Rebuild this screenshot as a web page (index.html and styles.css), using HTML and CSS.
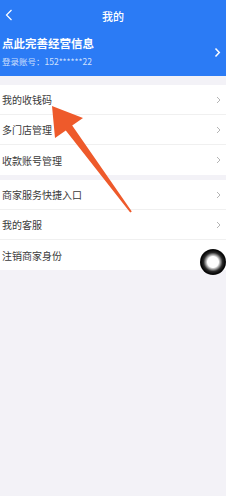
FILE: index.html
```html
<!DOCTYPE html>
<html lang="zh">
<head>
<meta charset="utf-8">
<link rel="stylesheet" href="styles.css">
</head>
<body>
<div class="page">
  <header class="hero">
    <div class="nav">
      <svg class="back" width="8" height="12" viewBox="0 0 8 12"><polyline points="6.5,1 1.5,6 6.5,11" fill="none" stroke="#fff" stroke-width="1.2"/></svg>
      <div class="title">我的</div>
    </div>
    <div class="info">
      <div class="info-text">
        <div class="info-title">点此完善经营信息</div>
        <div class="info-sub">登录账号：152******22</div>
      </div>
      <svg class="info-arrow" width="7" height="11" viewBox="0 0 7 11"><polyline points="1.5,1.5 5.3,5.5 1.5,9.5" fill="none" stroke="#fff" stroke-width="1.5"/></svg>
    </div>
  </header>
  <section class="group first">
    <div class="row"><span>我的收钱码</span><svg class="chev" width="5" height="8" viewBox="0 0 5 8"><polyline points="1,1 4,4 1,7" fill="none" stroke="#b5b5b5" stroke-width="1"/></svg></div>
    <div class="row"><span>多门店管理</span><svg class="chev" width="5" height="8" viewBox="0 0 5 8"><polyline points="1,1 4,4 1,7" fill="none" stroke="#b5b5b5" stroke-width="1"/></svg></div>
    <div class="row"><span>收款账号管理</span><svg class="chev" width="5" height="8" viewBox="0 0 5 8"><polyline points="1,1 4,4 1,7" fill="none" stroke="#b5b5b5" stroke-width="1"/></svg></div>
  </section>
  <section class="group second">
    <div class="row"><span>商家服务快捷入口</span><svg class="chev" width="5" height="8" viewBox="0 0 5 8"><polyline points="1,1 4,4 1,7" fill="none" stroke="#b5b5b5" stroke-width="1"/></svg></div>
    <div class="row"><span>我的客服</span><svg class="chev" width="5" height="8" viewBox="0 0 5 8"><polyline points="1,1 4,4 1,7" fill="none" stroke="#b5b5b5" stroke-width="1"/></svg></div>
    <div class="row"><span>注销商家身份</span></div>
  </section>
  <svg class="pointer" width="226" height="496" viewBox="0 0 226 496">
    <polygon points="52,106 83,118 72.2,125.6 131.8,211.4 130.2,212.6 65.8,130.4 55,138" fill="#ee5a2b"/>
  </svg>
  <div class="touch"></div>
</div>
</body>
</html>
```
FILE: styles.css
```css
html, body {
  margin: 0;
  padding: 0;
}
body {
  width: 226px;
  height: 496px;
  overflow: hidden;
  background: #f3f2f7;
  font-family: "Noto Sans CJK SC", "Noto Sans", sans-serif;
}
.page {
  position: relative;
  width: 226px;
  height: 496px;
}
.hero {
  background: #2b7bf5;
  height: 76px;
  color: #fff;
}
.nav {
  height: 32px;
  display: flex;
  align-items: center;
  justify-content: center;
  position: relative;
}
.back {
  position: absolute;
  left: 5px;
  top: 9px;
}
.title {
  font-size: 11px;
  font-weight: 500;
  line-height: 32px;
}
.info {
  display: flex;
  align-items: center;
  justify-content: space-between;
  padding: 3px 5px 0 2px;
}
.info-title {
  font-size: 11.5px;
  font-weight: 700;
  line-height: 16px;
}
.info-sub {
  font-size: 8.5px;
  line-height: 14px;
  margin-top: 3px;
  color: rgba(255, 255, 255, 0.78);
}
.info-arrow {
  margin-top: 2px;
}
.group {
  background: #fff;
}
.group.first {
  margin-top: 9px;
}
.group.second {
  margin-top: 5px;
}
.row {
  height: 30px;
  display: flex;
  align-items: center;
  justify-content: space-between;
  padding: 0 5px 0 2px;
  font-size: 10px;
  color: #3a3a3a;
  box-sizing: border-box;
  border-bottom: 1px solid #f0f0f0;
}
.row:last-child {
  border-bottom: none;
}
.pointer {
  position: absolute;
  left: 0;
  top: 0;
  pointer-events: none;
}
.touch {
  position: absolute;
  left: 200px;
  top: 249px;
  width: 26px;
  height: 26px;
  border-radius: 50%;
  background: radial-gradient(circle, #fff 0, #fff 5.5px, #c8c8c8 6.5px, #7a7a7a 8px, #2a2a2a 9.5px, #050505 12px, #111 13px);
}
```
